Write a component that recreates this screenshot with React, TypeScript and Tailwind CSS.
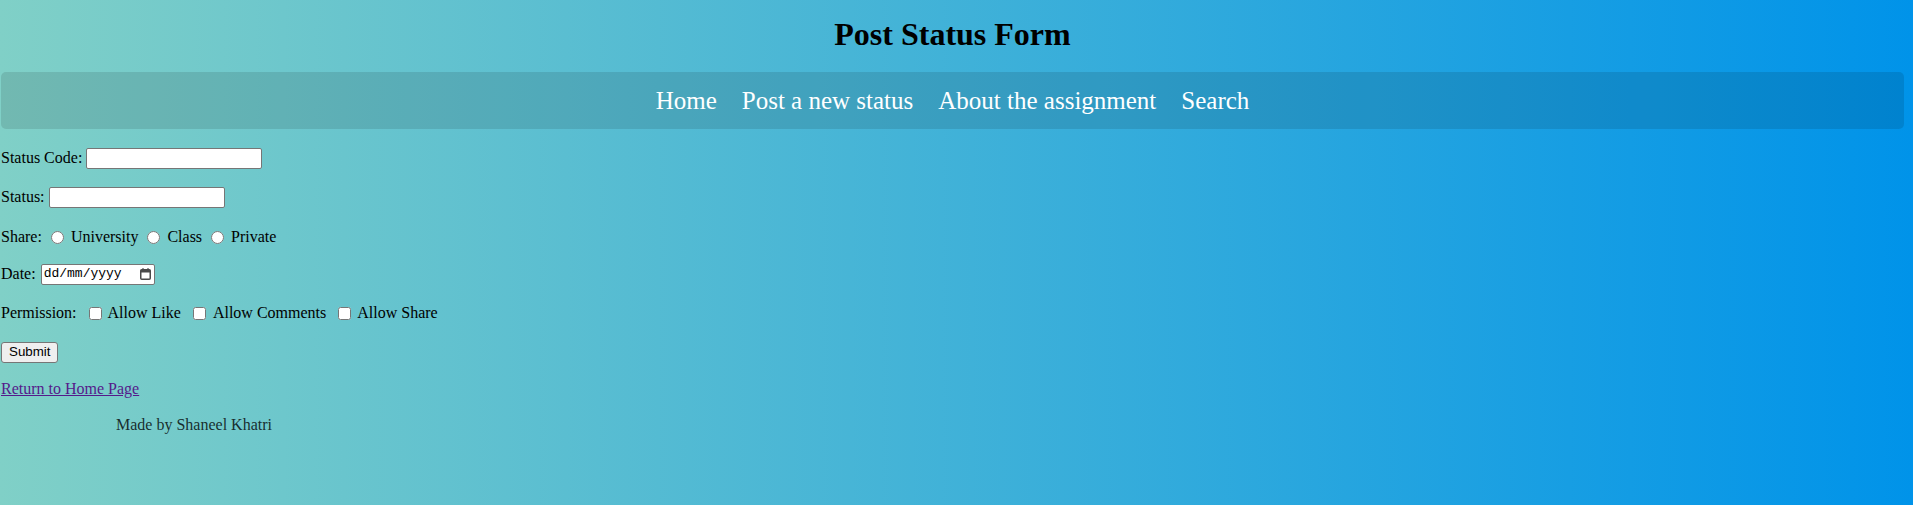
export default function App() {
  return (
    <div className="flow-root min-h-screen bg-[linear-gradient(90deg,#80D0C7_0%,#0093E9_100%)] font-['Liberation_Serif','Times_New_Roman',serif] text-[16px] text-black">
      {/* Header */}
      <div className="ml-[1px] w-[1903px] pt-[16px]">
        <h1 className="mb-[19px] h-[37px] text-center text-[32px] font-bold leading-[37px]">
          Post Status Form
        </h1>

        <nav className="flex h-[57px] items-center justify-center gap-[25px] rounded-[5px] bg-black/[0.11] text-[25px] text-white">
          <a href="#">Home</a>
          <a href="#">Post a new status</a>
          <a href="#">About the assignment</a>
          <a href="#">Search</a>
        </nav>
      </div>

      {/* Form */}
      <form className="flex flex-col pl-[1px]" onSubmit={(e) => e.preventDefault()}>
        <div className="mt-[18px] flex h-[22px] items-center">
          <label htmlFor="code">Status Code:</label>
          <input
            id="code"
            type="text"
            className="ml-[4px] h-[21px] w-[176px] rounded-[2px] border border-[#767676] bg-white px-[2px] font-['Liberation_Sans',Arial,sans-serif] text-[13px]"
          />
        </div>

        <div className="mt-[17px] flex h-[22px] items-center">
          <label htmlFor="status">Status:</label>
          <input
            id="status"
            type="text"
            className="ml-[4px] h-[21px] w-[176px] rounded-[2px] border border-[#767676] bg-white px-[2px] font-['Liberation_Sans',Arial,sans-serif] text-[13px]"
          />
        </div>

        <div className="mt-[18px] flex h-[22px] items-center">
          <span>Share:</span>
          <input type="radio" name="share" id="uni" className="ml-[9px] h-[13px] w-[13px]" />
          <label htmlFor="uni" className="ml-[7px]">University</label>
          <input type="radio" name="share" id="class" className="ml-[9px] h-[13px] w-[13px]" />
          <label htmlFor="class" className="ml-[7px]">Class</label>
          <input type="radio" name="share" id="private" className="ml-[9px] h-[13px] w-[13px]" />
          <label htmlFor="private" className="ml-[7px]">Private</label>
        </div>

        <div className="mt-[15px] flex h-[22px] items-center">
          <span>Date:</span>
          <div className="ml-[5px] flex h-[21px] w-[114px] items-center justify-between rounded-[2px] border border-[#767676] bg-white pl-[2px] pr-[3px] font-['Liberation_Mono','DejaVu_Sans_Mono',monospace] text-[13px]">
            <span>dd/mm/yyyy</span>
            <svg width="11" height="12" viewBox="0 0 11 12">
              <rect x="0.75" y="1.75" width="9.5" height="9.5" rx="1" fill="none" stroke="#4a4a4a" strokeWidth="1.5" />
              <rect x="0.75" y="1.75" width="9.5" height="2.75" fill="#4a4a4a" />
              <rect x="2.25" y="0.25" width="1.5" height="2" fill="#4a4a4a" />
              <rect x="7.25" y="0.25" width="1.5" height="2" fill="#4a4a4a" />
            </svg>
          </div>
        </div>

        <div className="mt-[17px] flex h-[22px] items-center">
          <span>Permission:</span>
          <input type="checkbox" id="like" className="ml-[12px] h-[13px] w-[13px]" />
          <label htmlFor="like" className="ml-[6px]">Allow Like</label>
          <input type="checkbox" id="comments" className="ml-[12px] h-[13px] w-[13px]" />
          <label htmlFor="comments" className="ml-[7px]">Allow Comments</label>
          <input type="checkbox" id="sharing" className="ml-[12px] h-[13px] w-[13px]" />
          <label htmlFor="sharing" className="ml-[6px]">Allow Share</label>
        </div>

        <div className="mt-[17px] flex h-[22px] items-center">
          <button
            type="submit"
            className="h-[21px] rounded-[3px] border border-[#767676] bg-[#efefef] px-[7px] font-['Liberation_Sans',Arial,sans-serif] text-[13.33px] leading-none"
          >
            Submit
          </button>
        </div>

        <div className="mt-[15px] flex h-[22px] items-center">
          <a href="#" className="text-[#551a8b] underline">
            Return to Home Page
          </a>
        </div>

        <div className="mt-[14px] flex h-[22px] items-center pl-[115px] text-black/80">
          Made by Shaneel Khatri
        </div>
      </form>
    </div>
  );
}
